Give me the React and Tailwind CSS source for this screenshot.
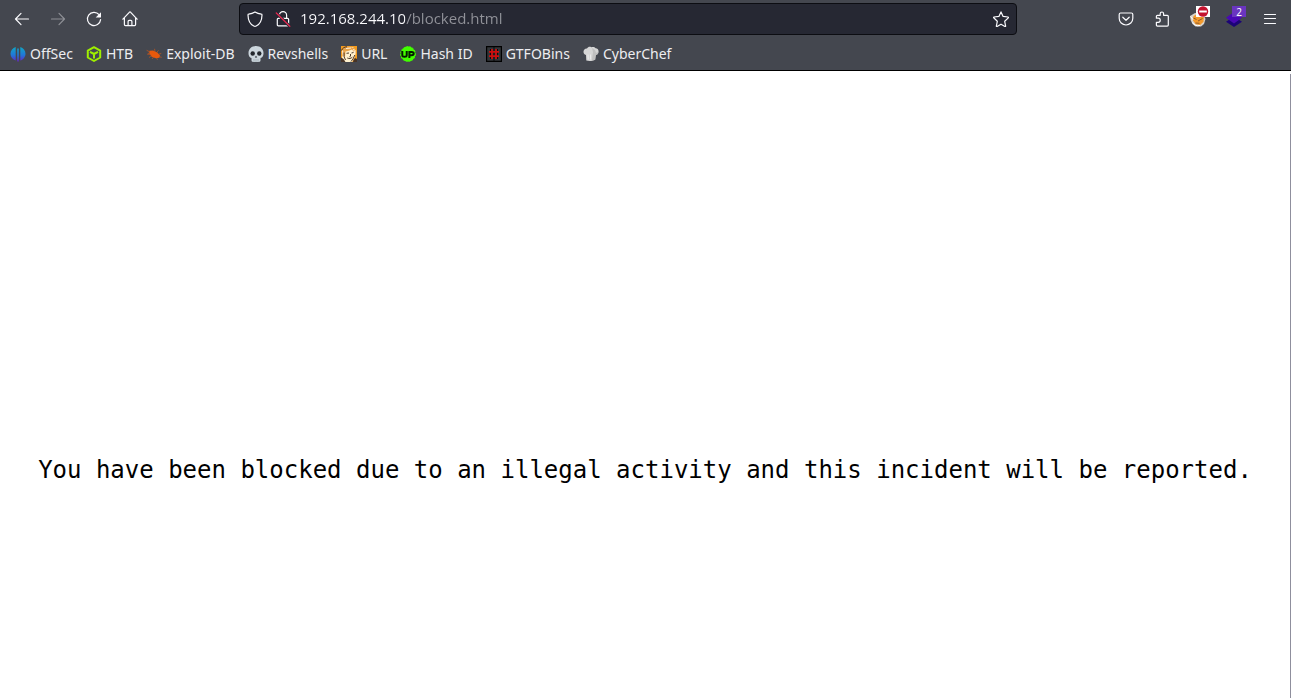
const line = { fill: 'none', stroke: 'currentColor', strokeWidth: 1.2, strokeLinecap: 'round', strokeLinejoin: 'round' };

function Icon({ children, className = 'size-4 shrink-0' }) {
  return (
    <svg viewBox="0 0 16 16" className={className} aria-hidden="true">
      {children}
    </svg>
  );
}

const BackIcon = () => (
  <Icon><path {...line} d="M14.5 8H1.7M7 2.4 1.5 8 7 13.6" /></Icon>
);
const ForwardIcon = () => (
  <Icon><path {...line} d="M1.5 8h12.8M9 2.4 14.5 8 9 13.6" /></Icon>
);
const ReloadIcon = () => (
  <Icon>
    <path {...line} d="M13.1 3.7A6.6 6.6 0 1 0 14.6 8.6" />
    <path fill="currentColor" d="M15 1.2v4.9a.5.5 0 0 1-.5.5H9.7z" />
  </Icon>
);
const HomeIcon = () => (
  <Icon>
    <path {...line} d="M.9 8.2 7.3 1.3a1 1 0 0 1 1.4 0l6.4 6.9M2.4 7v6.6c0 .6.4 1 1 1h9.2c.6 0 1-.4 1-1V7" />
    <path {...line} d="M6.1 14.4v-4c0-.6.4-1 1-1h1.8c.6 0 1 .4 1 1v4" />
  </Icon>
);
const ShieldIcon = () => (
  <Icon>
    <path {...line} d="M8 .9c1.9 1.2 4 1.9 6.4 2.2.4 0 .6.4.6.8-.1 4.9-1.7 9-5.8 11.1-.8.4-1.6.4-2.4 0C2.7 12.9 1.1 8.8 1 3.9c0-.4.2-.8.6-.8C4 2.8 6.1 2.1 8 .9z" />
  </Icon>
);
const InsecureIcon = () => (
  <Icon>
    <path {...line} d="M4.400 7.200V4.200a3.600 3.600 0 0 1 7.200 0v3M3.300 7.300h9.300c.6 0 1 .4 1 1v5.500c0 .6-.4 1-1 1H3.300c-.6 0-1-.4-1-1V8.300c0-.6.4-1 1-1z" />
    <path d="M1.300 2 14.800 15.300" stroke="#262833" strokeWidth="3" />
    <path d="M1.300 2 14.800 15.300" stroke="#e22850" strokeWidth="1.3" strokeLinecap="round" />
  </Icon>
);
const StarIcon = () => (
  <Icon>
    <path {...line} d="M8 .9l2.100 4.500 4.900.6c.5.100.6.5.3.8l-3.600 3.500.9 4.700c.1.400-.3.700-.7.500L8 13.200l-3.900 2.300c-.4.200-.8-.1-.7-.5l.9-4.700L.7 6.800c-.3-.3-.2-.7.3-.8l4.900-.6z" />
  </Icon>
);
const PocketIcon = () => (
  <Icon>
    <path {...line} d="M2.600 2h10.800c.8 0 1.400.6 1.400 1.400v3.800a6.800 6.800 0 0 1-13.600 0V3.400C1.200 2.600 1.800 2 2.600 2z" />
    <path {...line} d="M4.800 6.200 8 9.300l3.200-3.100" />
  </Icon>
);
const PuzzleIcon = () => (
  <Icon>
    <path {...line} d="M2.400 7.100V5.300c0-.6.400-1 1-1h2.800V2.700a1.700 1.700 0 0 1 3.400 0v1.600h3.700c.6 0 1 .4 1 1v8.800c0 .6-.4 1-1 1H3.400c-.6 0-1-.4-1-1v-2.800h1.800a2 2 0 0 0 0-4.100H2.400z" />
  </Icon>
);
const MenuIcon = () => (
  <Icon><path {...line} d="M2.500 3.500h11M2.500 7.500h11M2.500 12.500h11" /></Icon>
);
const FoxIcon = () => (
  <Icon className="size-4">
    <path fill="#d8d2ca" d="M0 5 .8 9.500 2.500 13 5.500 15.500h5.500l3-2.500L15.500 8 13 3 5 2z" />
    <path fill="#f39a2d" d="M3.500 5 3 9.500l2.600 3.700 4.600.8 3.300-3.300L14 5 9 2z" />
    <path fill="none" stroke="#8f5a2a" strokeWidth="1" d="M3.500 7l3 1.500M8 10l4.500-2.500M5.500 12l4 .3" />
    <path fill="none" stroke="#fff" strokeWidth="1" d="M.5 5.500 3 8.500M2.500 11.500c1.500 2.500 4 3.800 7.500 3" />
  </Icon>
);
const LayersIcon = () => (
  <Icon className="size-4">
    <path fill="#1c0476" d="M0 10.800 8 5.500l8 5.300L8 16z" />
    <path fill="#4a08b4" d="M0 6.800 8 1l8 5.800-8 5.600z" />
  </Icon>
);

const OffSecIcon = () => (
  <Icon>
    <defs>
      <linearGradient id="offsec" x1="0" y1="0" x2="0" y2="1">
        <stop offset="0" stopColor="#10a7c4" />
        <stop offset=".55" stopColor="#2176d8" />
        <stop offset="1" stopColor="#6a1fc0" />
      </linearGradient>
    </defs>
    <path fill="url(#offsec)" d="M5.700.9v13.700C2.700 13.600.5 11 .5 7.700S2.700 1.900 5.700.9zM7.200 2.500h1.600V15l-.8 1-.8-1zM10.300.9c3 1 5.200 3.500 5.200 6.800s-2.200 5.900-5.200 6.900z" />
  </Icon>
);
const HtbIcon = () => (
  <Icon>
    <path fill="none" stroke="#9fef00" strokeWidth="2" strokeLinejoin="round" d="M8 1.200 14.200 4.600v6.900L8 15l-6.200-3.500V4.600zM4 5.800 8 8l4-2.200M8 8v4.500" />
  </Icon>
);
const ExploitIcon = () => (
  <Icon>
    <path fill="#e9590c" d="M3.500 4.800 7 4.500l4.400 2 2.600 3-.6 2.300-3.500.5-4.300-1.600-2.200-3.200z" />
    <path fill="none" stroke="#c9561a" strokeWidth=".7" d="M.6 4.300 4 6 1.500 8.200l2.800.2M3 11.600l2.600-2.200M6 13l1.600-2M8.500 2.800 9 5.500M12.500 4.300l-1.800 2.200M15.300 7.400l-2.300.7M15.700 11.300l-2.400-.5M11.500 13.800l-.8-1.700" />
  </Icon>
);
const SkullIcon = () => (
  <Icon>
    <path fill="#ccd6dd" d="M8 0c4.400 0 7.500 2.800 7.500 7 0 1.600-.4 3-1.200 4-.5.600-1.300.8-1.800 1v2.600c0 .5-.3.900-.8 1.100-.9.300-2.200.3-3.700.3s-2.800 0-3.700-.3c-.5-.2-.8-.6-.8-1.100V12c-.5-.2-1.300-.4-1.800-1C.9 10 .5 8.600.5 7 .5 2.800 3.600 0 8 0z" />
    <circle cx="4.700" cy="7.500" r="2.200" fill="#23272d" />
    <circle cx="11.300" cy="7.500" r="2.200" fill="#23272d" />
    <path fill="#23272d" d="M8 9.800l1.200 1.800H6.800z" />
    <path stroke="#8d9aa3" strokeWidth=".6" d="M6 13v2.800M8 13v3M10 13v2.800" />
  </Icon>
);
const FaceIcon = () => (
  <Icon>
    <path fill="#f29a1e" d="M0 0h16v16H0z" />
    <path fill="#fff1cf" d="M2 4 5 1h7l3 4-1 6-3 5H4L1 12z" />
    <path fill="#e8a34a" d="M2 1 8 .5l5 1.500 2 5-2-1-2-2.500L7 5 4.500 5.500 4 11l-3-1z" />
    <path fill="none" stroke="#fff" strokeWidth=".8" d="M1.500 4.500 2.500 11M5 2.500 10 2M12.500 3l1.500 4" />
    <path fill="none" stroke="#3a2417" strokeWidth=".9" d="M.5 4.500C1.500 2 3.500.8 6 .8M3 6.500v4L4.500 14M5.500 7.300 8 7M10.500 7l2-.5M9.500 8v2.200l-1 .4M6.300 12c2 .9 3.600.5 5-.8M13.800 9 12 13l-2 2.500" />
    <path fill="#473326" d="M0 11.500l2.500 1.500 2 3H0zM12.500 14l1.500-2 2 1v3h-4z" />
  </Icon>
);
const HashIcon = () => (
  <Icon>
    <circle cx="8" cy="8" r="7.400" fill="#42ff00" stroke="#42ff00" strokeDasharray="2 1" />
    <path fill="none" stroke="#061c00" strokeWidth="2" d="M2.300 5v4.200c0 1.200.8 1.500 2.200 1.500s2.200-.3 2.200-1.500V5M9.400 12V6h2.400c1.300 0 1.900.5 1.900 1.600s-.6 1.700-1.900 1.700H9.500" />
  </Icon>
);
const GtfoIcon = () => (
  <Icon>
    <path fill="#323538" stroke="#000" strokeWidth="1.200" d="M.6.6h14.800v14.800H.6z" />
    <path stroke="#0b0b0b" strokeWidth="1" d="M4.500 3v10M8 1v14M11.500 3v10" />
    <path fill="none" stroke="#d00d0d" strokeWidth="1.700" d="M6 3v10M10 3v10M3 5.900h10M3 10.200h10" />
  </Icon>
);
const ChefIcon = () => (
  <Icon>
    <path fill="#d6d6d6" d="M3.300 14.500 3 9C1.300 8.700.4 7.300.5 5.600.6 3.500 2 2.200 4 2.400 5 .9 6.800.4 8.300 1.300c1.600-.8 3.500-.3 4.300 1 2 .1 3.200 1.600 3 3.500-.2 1.800-1.200 3-2.600 3.300l-.8 4.600c-2.500 1.300-6 1.600-8.900.8z" />
    <path fill="#aaa" d="M9 2l1 4-1.200 8.900 3.400-1.200.8-4.600c1.400-.3 2.400-1.500 2.600-3.300L13 7l-1-3z" opacity=".5" />
    <path stroke="#f4f4f4" strokeWidth=".7" d="M5 8.500l.3 5M7.500 8.500v5" />
  </Icon>
);

const bookmarks = [
  ['OffSec', OffSecIcon],
  ['HTB', HtbIcon],
  ['Exploit-DB', ExploitIcon],
  ['Revshells', SkullIcon],
  ['URL', FaceIcon],
  ['Hash ID', HashIcon],
  ['GTFOBins', GtfoIcon],
  ['CyberChef', ChefIcon],
];

function ToolButton({ label, disabled, children }) {
  return (
    <button
      type="button"
      aria-label={label}
      disabled={disabled}
      className="relative flex h-8 w-9 shrink-0 items-center justify-center text-[#fbfbfe] disabled:opacity-40"
    >
      {children}
    </button>
  );
}

export default function App() {
  return (
    <div className="flex min-h-screen flex-col bg-white font-['Noto_Sans',sans-serif] text-sm">
      <header className="border-b border-black bg-[#44474f] text-[#fbfbfe]">
        <nav className="flex items-center pt-[3px] pr-[3px] pl-1" aria-label="Navigation">
          <ToolButton label="Back"><BackIcon /></ToolButton>
          <ToolButton label="Forward" disabled><ForwardIcon /></ToolButton>
          <ToolButton label="Reload"><ReloadIcon /></ToolButton>
          <ToolButton label="Home"><HomeIcon /></ToolButton>
          <div className="mx-[91px] flex h-8 min-w-0 flex-1 items-center rounded border border-[#0c0d12] bg-[#262833] px-[7px]">
            <ShieldIcon />
            <span className="ml-3 flex"><InsecureIcon /></span>
            <input
              type="text"
              aria-label="Address"
              defaultValue="192.168.244.10/blocked.html"
              spellCheck={false}
              className="ml-[9px] min-w-0 flex-1 bg-[linear-gradient(90deg,#fbfbfe_105px,#919299_105px)] bg-clip-text font-['Open_Sans',sans-serif] text-[15px] text-transparent caret-white outline-none"
            />
            <button type="button" aria-label="Bookmark this page" className="flex"><StarIcon /></button>
          </div>
          <ToolButton label="Save to Pocket"><PocketIcon /></ToolButton>
          <ToolButton label="Extensions"><PuzzleIcon /></ToolButton>
          <ToolButton label="FoxyProxy">
            <FoxIcon />
            <svg viewBox="0 0 14 11" className="absolute top-[3px] right-[6px] h-[11px] w-[14px]" aria-hidden="true">
              <path fill="#fff" d="M0 0h14v11H0z" />
              <circle cx="7" cy="5.500" r="5.200" fill="#c4122f" />
              <path fill="#fff" d="M3.200 4.500h7.600v2H3.200z" />
            </svg>
          </ToolButton>
          <ToolButton label="Wappalyzer">
            <LayersIcon />
            <span className="absolute top-[3px] right-[6px] flex h-[11px] w-[14px] items-center justify-center bg-[#6a35bf] text-[10px] leading-none">2</span>
          </ToolButton>
          <ToolButton label="Menu"><MenuIcon /></ToolButton>
        </nav>
        <ul className="flex gap-[13px] px-[10px] pt-2 pb-[5px] text-[#ededf0]">
          {bookmarks.map(([name, Mark]) => (
            <li key={name}>
              <a href="#" className="flex items-center gap-1 leading-[22px]">
                <Mark />
                {name}
              </a>
            </li>
          ))}
        </ul>
      </header>
      <main className="mt-[3px] flex flex-1 items-center justify-center border-r border-[#8f8f9d] pt-[168px]">
        <p className="font-['DejaVu_Sans_Mono',monospace] text-2xl text-black">
          You have been blocked due to an illegal activity and this incident will be reported.
        </p>
      </main>
    </div>
  );
}
